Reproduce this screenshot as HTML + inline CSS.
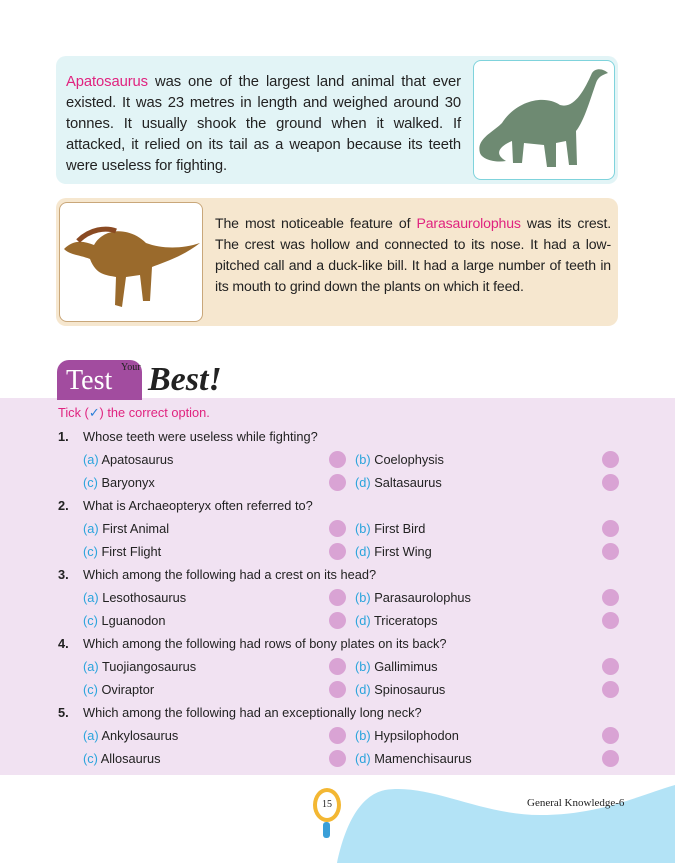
<!DOCTYPE html>
<html><head><meta charset="utf-8"><style>
*{margin:0;padding:0;box-sizing:border-box}
body{width:675px;height:863px;background:#fff;font-family:"Liberation Sans",sans-serif;position:relative;overflow:hidden;color:#222}
.abs{position:absolute}
.box1{left:56px;top:56px;width:562px;height:128px;background:#e2f4f6;border-radius:10px}
.box2{left:56px;top:198px;width:562px;height:128px;background:#f6e7cf;border-radius:10px}
.p{font-size:14.8px;line-height:21px;letter-spacing:-0.1px}
.pk{color:#e0237f}
.img{background:#fff;border-radius:8px}
.band{left:0;top:398px;width:675px;height:377px;background:#f1e2f2}
.row{position:absolute;font-size:12.8px;line-height:16px}
.o{color:#2aa4dc}
.c{position:absolute;width:17px;height:17px;border-radius:50%;background:#d9a3d4}
.q{font-weight:bold}
</style></head><body>
<div class="abs box1"></div>
<div class="abs p" style="left:66px;top:72px;width:395px;text-align:justify;text-align-last:left"><span class="pk">Apatosaurus</span> was one of the largest land animal that ever existed. It was 23 metres in length and weighed around 30 tonnes. It usually shook the ground when it walked. If attacked, it relied on its tail as a weapon because its teeth were useless for fighting.</div>
<div class="abs img" style="left:473px;top:60px;width:142px;height:120px;border:1.5px solid #7fd3dc">
<svg width="140" height="118" viewBox="0 0 140 118"><path d="M6 92 C2 78 18 72 28 62 C42 40 70 33 86 44 C100 48 110 30 118 12 C122 6 130 8 134 12 C128 14 124 16 122 22 C115 42 110 60 102 70 L103 104 L95 104 L92 80 L82 82 L82 106 L73 106 L70 84 L50 82 L48 102 L39 102 L38 80 C28 84 18 92 32 100 C20 102 8 98 6 92Z" fill="#6e8a72"/></svg></div>

<div class="abs box2"></div>
<div class="abs img" style="left:59px;top:202px;width:144px;height:120px;border:1.5px solid #c9a77a">
<svg width="142" height="118" viewBox="0 0 142 118"><path d="M4 46 C14 36 24 38 34 42 C44 24 70 24 86 40 C102 46 122 46 140 40 C122 54 102 60 92 64 L90 98 L83 98 L80 72 L66 74 L62 104 L55 102 L56 74 C46 72 36 72 30 56 C20 52 10 52 4 46Z" fill="#9a6a2c"/><path d="M18 38 C30 26 46 24 56 28" stroke="#8a4a22" stroke-width="5" fill="none"/></svg></div>
<div class="abs p" style="left:215px;top:213px;width:396px;font-size:14.1px;letter-spacing:-0.15px;text-align:justify;text-align-last:left">The most noticeable feature of <span class="pk">Parasaurolophus</span> was its crest. The crest was hollow and connected to its nose. It had a low-pitched call and a duck-like bill. It had a large number of teeth in its mouth to grind down the plants on which it feed.</div>

<div class="abs band"></div>
<div class="abs" style="left:57px;top:360px;width:85px;height:40px;background:#a24c9f;border-radius:12px 12px 0 0"></div>
<div class="abs" style="left:66px;top:363px;font-family:'Liberation Serif',serif;font-size:28px;color:#fff;line-height:36px">Test</div>
<div class="abs" style="left:121px;top:362px;font-family:'Liberation Serif',serif;font-size:10px;color:#222">Your</div>
<div class="abs" style="left:148px;top:362px;font-family:'Liberation Serif',serif;font-size:34px;font-style:italic;font-weight:bold;color:#222;line-height:36px">Best!</div>

<div class="row" style="left:58px;top:405px;color:#e0237f">Tick (<span style="color:#2a7fd8">✓</span>) the correct option.</div>
<div id="qs"></div>
<script>
var d=[["Whose teeth were useless while fighting?","Apatosaurus","Coelophysis","Baryonyx","Saltasaurus"],
["What is Archaeopteryx often referred to?","First Animal","First Bird","First Flight","First Wing"],
["Which among the following had a crest on its head?","Lesothosaurus","Parasaurolophus","Lguanodon","Triceratops"],
["Which among the following had rows of bony plates on its back?","Tuojiangosaurus","Gallimimus","Oviraptor","Spinosaurus"],
["Which among the following had an exceptionally long neck?","Ankylosaurus","Hypsilophodon","Allosaurus","Mamenchisaurus"]];
var h="",y=429;
d.forEach(function(q,i){
h+='<div class="row" style="left:58px;top:'+y+'px"><span class="q">'+(i+1)+'.</span></div><div class="row" style="left:83px;top:'+y+'px">'+q[0]+'</div>';
var ls=["a","b","c","d"];
for(var r=0;r<2;r++){var yy=y+23*(r+1);
h+='<div class="row" style="left:83px;top:'+yy+'px"><span class="o">('+ls[r*2]+')</span> '+q[1+r*2]+'</div>';
h+='<div class="row" style="left:355px;top:'+yy+'px"><span class="o">('+ls[r*2+1]+')</span> '+q[2+r*2]+'</div>';
h+='<div class="c" style="left:329px;top:'+(yy-1)+'px"></div><div class="c" style="left:602px;top:'+(yy-1)+'px"></div>';}
y+=69;});
document.getElementById("qs").innerHTML=h;
</script>

<svg class="abs" style="left:0;top:775px" width="675" height="88" viewBox="0 0 675 88"><path d="M337 88 C345 50 360 20 385 15 C430 8 480 40 540 40 C600 40 640 20 675 10 L675 88Z" fill="#b3e3f6"/></svg>
<div class="abs" style="left:313px;top:788px;width:28px;height:34px;border-radius:50%;border:4px solid #f3b733;background:#fff;font-family:'Liberation Serif',serif;font-size:10px;text-align:center;line-height:26px">15</div>
<div class="abs" style="left:323px;top:822px;width:7px;height:16px;background:#3a9fd8;border-radius:3px"></div>
<div class="abs" style="left:527px;top:797px;font-family:'Liberation Serif',serif;font-size:11px;color:#222">General Knowledge-6</div>
</body></html>
